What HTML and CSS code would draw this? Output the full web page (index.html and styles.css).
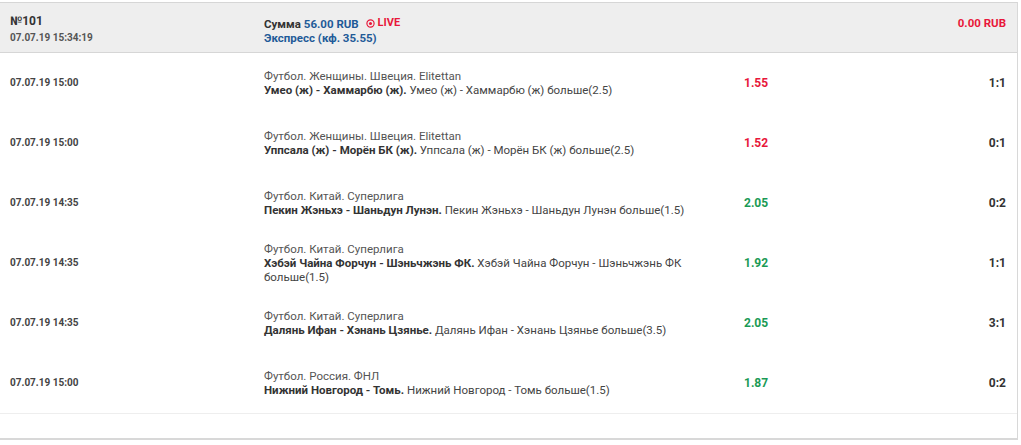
FILE: index.html
```html
<!DOCTYPE html>
<html lang="ru">
<head>
<meta charset="utf-8">
<link rel="stylesheet" href="styles.css">
</head>
<body>
<div class="bet">
  <div class="bet-head">
    <div class="c-date">
      <div class="num">№101</div>
      <div class="stamp">07.07.19 15:34:19</div>
    </div>
    <div class="c-event">
      <div class="sum"><span class="lbl">Сумма</span> <span class="blue">56.00 RUB</span>
        <span class="live"><svg class="live-ico" width="9" height="9" viewBox="0 0 10 10"><circle cx="5" cy="5" r="4" fill="none" stroke="#e8173a" stroke-width="1.3"/><circle cx="5" cy="5" r="1.7" fill="#e8173a"/></svg>LIVE</span></div>
      <div class="blue">Экспресс (кф. 35.55)</div>
    </div>
    <div class="c-win">0.00 RUB</div>
  </div>

  <div class="rows">
  <div class="row">
    <div class="c-date d">07.07.19 15:00</div>
    <div class="c-event"><div class="league">Футбол. Женщины. Швеция. Elitettan</div><div><b>Умео (ж) - Хаммарбю (ж).</b> Умео (ж) - Хаммарбю (ж) больше(2.5)</div></div>
    <div class="c-odd red">1.55</div>
    <div class="c-score">1:1</div>
  </div>
  <div class="row">
    <div class="c-date d">07.07.19 15:00</div>
    <div class="c-event"><div class="league">Футбол. Женщины. Швеция. Elitettan</div><div><b>Уппсала (ж) - Морён БК (ж).</b> Уппсала (ж) - Морён БК (ж) больше(2.5)</div></div>
    <div class="c-odd red">1.52</div>
    <div class="c-score">0:1</div>
  </div>
  <div class="row">
    <div class="c-date d">07.07.19 14:35</div>
    <div class="c-event"><div class="league">Футбол. Китай. Суперлига</div><div><b>Пекин Жэньхэ - Шаньдун Лунэн.</b> Пекин Жэньхэ - Шаньдун Лунэн больше(1.5)</div></div>
    <div class="c-odd green">2.05</div>
    <div class="c-score">0:2</div>
  </div>
  <div class="row">
    <div class="c-date d">07.07.19 14:35</div>
    <div class="c-event"><div class="league">Футбол. Китай. Суперлига</div><div><b>Хэбэй Чайна Форчун - Шэньчжэнь ФК.</b> Хэбэй Чайна Форчун - Шэньчжэнь ФК больше(1.5)</div></div>
    <div class="c-odd green">1.92</div>
    <div class="c-score">1:1</div>
  </div>
  <div class="row">
    <div class="c-date d">07.07.19 14:35</div>
    <div class="c-event"><div class="league">Футбол. Китай. Суперлига</div><div><b>Далянь Ифан - Хэнань Цзянье.</b> Далянь Ифан - Хэнань Цзянье больше(3.5)</div></div>
    <div class="c-odd green">2.05</div>
    <div class="c-score">3:1</div>
  </div>
  <div class="row">
    <div class="c-date d">07.07.19 15:00</div>
    <div class="c-event"><div class="league">Футбол. Россия. ФНЛ</div><div><b>Нижний Новгород - Томь.</b> Нижний Новгород - Томь больше(1.5)</div></div>
    <div class="c-odd green">1.87</div>
    <div class="c-score">0:2</div>
  </div>
  </div>
  <div class="foot"></div>
</div>
</body>
</html>
```
FILE: styles.css
```css
* { box-sizing: border-box; }
html, body { margin: 0; padding: 0; background: #fff; }
body {
  font-family: Roboto, "Liberation Sans", Arial, sans-serif;
  font-size: 11.5px;
  color: #333;
  padding-top: 2px;
}
.bet {
  width: 1018px;
  border-right: 1px solid #d8d8d8;
  border-bottom: 2px solid #d8d8d8;
}
.bet-head {
  display: flex;
  align-items: flex-start;
  height: 51px;
  background: #eeeeee;
  border-top: 1px solid #d6d6d6;
  border-bottom: 1px solid #d6d6d6;
  padding-top: 10px;
  line-height: 14px;
}
.c-date { width: 264px; padding-left: 10px; flex: none; }
.num { font-weight: 700; font-size: 12px; color: #333; line-height: 16px; }
.stamp { font-weight: 700; font-size: 10px; color: #555; line-height: 14px; margin-top: 2px; }
.bet-head .c-event { padding-top: 3px; font-weight: 700; flex: none; width: 480px; }
.lbl { color: #333; }
.blue { color: #1f5b98; font-weight: 700; }
.live { color: #e8173a; font-size: 11px; font-weight: 700; margin-left: 4px; display: inline-flex; align-items: center; gap: 3px; }
.live-ico { display: block; }
.c-win {
  flex: 1;
  text-align: right;
  padding-right: 11px;
  padding-top: 3px;
  color: #e8173a;
  font-weight: 700;
}
.rows { border-bottom: 1px solid #eeeeee; }
.row {
  display: flex;
  align-items: center;
  height: 60px;
  line-height: 14px;
}
.d { font-size: 10px; font-weight: 700; color: #444; }
.row .c-event { width: 480px; flex: none; padding-right: 40px; color: #444; }
.row .c-event b { color: #333; font-weight: 700; }
.league { color: #555; }
.c-odd { flex: 1; font-weight: 700; font-size: 12px; }
.red { color: #e8173a; }
.green { color: #1a9a55; }
.c-score { padding-right: 11px; font-weight: 700; font-size: 12px; color: #333; }
.foot { height: 24px; }
```
